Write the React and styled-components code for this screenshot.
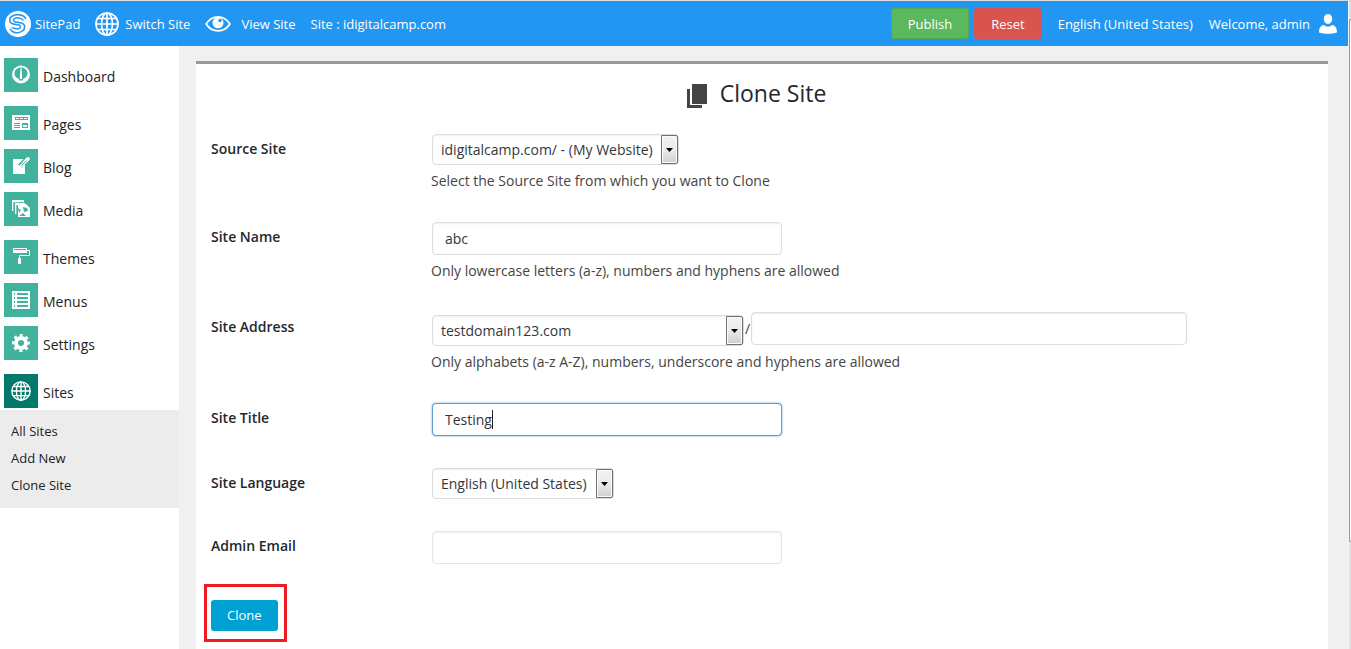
import styled, { createGlobalStyle, css } from 'styled-components'

const menu = [
  { name: 'Dashboard', icon: DashboardIcon, space: true },
  { name: 'Pages', icon: PagesIcon },
  { name: 'Blog', icon: BlogIcon },
  { name: 'Media', icon: MediaIcon, space: true },
  { name: 'Themes', icon: ThemesIcon },
  { name: 'Menus', icon: MenusIcon },
  { name: 'Settings', icon: SettingsIcon, space: true },
  { name: 'Sites', icon: GlobeIcon, active: true },
]

const subMenu = ['All Sites', 'Add New', 'Clone Site']

export default function App() {
  return (
    <>
      <GlobalStyle />
      <Screen>
        <Page>
          <TopBar />
          <Body>
            <SideBar />
            <Main>
              <CloneForm />
            </Main>
          </Body>
        </Page>
        <ScrollTrack>
          <ScrollThumb />
        </ScrollTrack>
      </Screen>
    </>
  )
}

function TopBar() {
  return (
    <Header>
      <HeaderGroup $gap="15px">
        <HeaderLink href="#" $gap="4px">
          <LogoIcon />
          SitePad
        </HeaderLink>
        <HeaderLink href="#" $gap="6px">
          <GlobeIcon size={24} />
          Switch Site
        </HeaderLink>
        <HeaderLink href="#" $gap="10px">
          <EyeIcon />
          View Site
        </HeaderLink>
        <span>Site : idigitalcamp.com</span>
      </HeaderGroup>
      <HeaderGroup $gap="16px">
        <HeaderButtons>
          <HeaderButton type="button" $color="#5cb85c" $border="#4cae4c">Publish</HeaderButton>
          <HeaderButton type="button" $color="#d9534f" $border="#d9534f">Reset</HeaderButton>
        </HeaderButtons>
        <HeaderLink href="#">English (United States)</HeaderLink>
        <HeaderLink href="#" $gap="8px">
          Welcome, admin
          <UserIcon />
        </HeaderLink>
      </HeaderGroup>
    </Header>
  )
}

function SideBar() {
  return (
    <Side>
      <MenuList>
        {menu.map(({ name, icon: Icon, space, active }) => (
          <MenuItem key={name} $space={space}>
            <MenuLink href="#">
              <MenuIcon $active={active}>
                <Icon size={20} />
              </MenuIcon>
              <span>{name}</span>
            </MenuLink>
          </MenuItem>
        ))}
      </MenuList>
      <SubMenu>
        {subMenu.map((name) => (
          <li key={name}>
            <SubLink href="#">{name}</SubLink>
          </li>
        ))}
      </SubMenu>
    </Side>
  )
}

function CloneForm() {
  return (
    <Panel>
      <Title>
        <CopyIcon />
        Clone Site
      </Title>
      <Form onSubmit={(e) => e.preventDefault()}>
        <Row>
          <Label htmlFor="source">Source Site</Label>
          <div>
            <Select id="source" width="247px" value="idigitalcamp.com/ - (My Website)" />
            <Help>Select the Source Site from which you want to Clone</Help>
          </div>
        </Row>
        <Row>
          <Label htmlFor="name">Site Name</Label>
          <div>
            <Input id="name" type="text" defaultValue="abc" />
            <Help>Only lowercase letters (a-z), numbers and hyphens are allowed</Help>
          </div>
        </Row>
        <Row>
          <Label htmlFor="domain">Site Address</Label>
          <div>
            <Address>
              <Select id="domain" width="312px" value="testdomain123.com" />
              <Slash>/</Slash>
              <Input type="text" aria-label="Directory" $wide />
            </Address>
            <Help>Only alphabets (a-z A-Z), numbers, underscore and hyphens are allowed</Help>
          </div>
        </Row>
        <Row>
          <Label htmlFor="title">Site Title</Label>
          <Caret>
            <Input id="title" type="text" defaultValue="Testing" autoFocus />
          </Caret>
        </Row>
        <Row>
          <Label htmlFor="language">Site Language</Label>
          <Select id="language" width="182px" value="English (United States)" />
        </Row>
        <Row>
          <Label htmlFor="email">Admin Email</Label>
          <Input id="email" type="email" $light />
        </Row>
        <Submit>
          <CloneButton type="submit">Clone</CloneButton>
        </Submit>
      </Form>
    </Panel>
  )
}

function Select({ id, width, value }) {
  return (
    <SelectBase $width={width}>
      <select id={id} defaultValue={value}>
        <option>{value}</option>
      </select>
      <Arrow>
        <svg width="7" height="4" viewBox="0 0 7 4">
          <path d="M0 0h7L3.500 4z" fill="#000" />
        </svg>
      </Arrow>
    </SelectBase>
  )
}

function LogoIcon() {
  return (
    <svg width="26" height="26" viewBox="0 0 26 26" fill="none" stroke="#2196f3" strokeWidth="1.5" strokeLinecap="round">
      <circle cx="13" cy="13" r="13" fill="#fff" stroke="none" />
      <path d="M20.700 7.300C19 5 17 4 14 3.800C11 3.600 9 4 7.300 5C5.500 6 4.600 7.500 4.700 9.200C4.800 11 5.800 12.200 7.500 12.800C9.500 13.500 12 13.400 14 14C16 14.600 16 16.800 14 17.500C12 18.100 9.500 17.900 7.300 16.700" />
      <path d="M18 9C16.500 7.500 15 6.800 13 6.700C11 6.600 9.500 7.200 8.700 8.300C8.100 9.400 8.500 10.300 9.700 10.700C11.500 11.200 13.500 11.100 15.300 11.700C18 12.500 19.700 13.500 19.700 15.500C19.700 17.500 19 19 17.300 20C15.500 21.300 13.500 21.800 11.300 21.700C8.800 21.600 6.800 20.500 5.300 18.300" />
    </svg>
  )
}

function GlobeIcon({ size }) {
  return (
    <svg width={size} height={size} viewBox="0 0 24 24" fill="none" stroke="#fff" strokeWidth="1.700">
      <circle cx="12" cy="12" r="11" />
      <ellipse cx="12" cy="12" rx="5.500" ry="11" />
      <path d="M12 1v22M1 12h22M3 6.500h18M3 17.500h18" />
    </svg>
  )
}

function EyeIcon() {
  return (
    <svg width="26" height="18" viewBox="0 0 26 18">
      <path d="M1.200 9C4 4.200 8.200 1.800 13 1.800S22 4.200 24.800 9C22 13.600 17.800 15.800 13 15.800S4 13.600 1.200 9z" fill="none" stroke="#fff" strokeWidth="1.800" />
      <circle cx="13" cy="7.800" r="5.500" fill="#fff" />
      <circle cx="15" cy="5.500" r="1.700" fill="#2196f3" />
    </svg>
  )
}

function UserIcon() {
  return (
    <svg width="20" height="20" viewBox="0 0 20 20" fill="#fff">
      <ellipse cx="10" cy="5" rx="4.200" ry="5" />
      <path d="M1 18.500C1 14 2.500 11.500 6 11C8.500 13.300 11.500 13.300 14 11C17.500 11.500 19 14 19 18.500C14 20.200 6 20.200 1 18.500z" />
    </svg>
  )
}

function CopyIcon() {
  return (
    <svg width="22" height="30" viewBox="0 -6 22 30" fill="#444">
      <path d="M6 0h15v20H6zM1 5h3v16h12v3H1z" />
    </svg>
  )
}

function DashboardIcon({ size }) {
  return (
    <svg width={size} height={size} viewBox="0 0 20 20">
      <circle cx="10" cy="9.500" r="9" fill="#fff" />
      <path d="M10 2.500C6.200 2.500 3.500 5 3.500 8.500C3.500 10.700 4.500 12 6.500 13.200V15.500H13.500V13.200C15.500 12 16.500 10.700 16.500 8.500C16.500 5 13.800 2.500 10 2.500z" fill="#41b29b" />
      <path d="M9.500 3h1L11.300 14H8.700z" fill="#fff" />
      <path d="M5 13l3 1v3H6zM15 13l-3 1v3h2z" fill="#fff" />
    </svg>
  )
}

function PagesIcon({ size }) {
  return (
    <svg width={size} height={size} viewBox="0 0 20 20">
      <path d="M1 2h18v15H1z" fill="#fff" />
      <path d="M4 4h13v3H4zM3 10h6v1H3zM3 12h6v1H3zM3 14h6v1H3zM11 10h6v5h-6z" fill="#41b29b" />
      <path d="M5 5h3v1H5zM9 5h3v1H9zM13 5h3v1h-3zM12 12h4v2h-4z" fill="#fff" />
    </svg>
  )
}

function BlogIcon({ size }) {
  return (
    <svg width={size} height={size} viewBox="0 0 20 20">
      <path d="M2 3h12v15H2z" fill="#fff" />
      <path d="M9 10L16.500 2.500" stroke="#41b29b" strokeWidth="5" />
      <path d="M8.500 11.500L9.500 8.500L15.500 1.500Q18 0 19 2.500L18.500 4L11.500 10.500z" fill="#fff" />
      <path d="M10.500 9.500L15.500 4.500" stroke="#41b29b" strokeWidth="1" />
    </svg>
  )
}

function MediaIcon({ size }) {
  return (
    <svg width={size} height={size} viewBox="0 0 20 20">
      <path d="M1 1h12v3H3v8H1zM4 4h10v3H6v8H4z" fill="#fff" />
      <path d="M2.500 12V3.500H13M5.500 15V6.500H14" fill="none" stroke="#41b29b" strokeWidth="0.700" />
      <path d="M7 5h8l4 4v9H7z" fill="#fff" />
      <path d="M7 9l3 2-2 3zM12 8l4 1 1 3-4 1zM8 17l4-3 3 3zM8 3h3v1H8z" fill="#41b29b" />
    </svg>
  )
}

function ThemesIcon({ size }) {
  return (
    <svg width={size} height={size} viewBox="0 0 20 20">
      <path d="M2 1h14v5H2z" fill="#fff" />
      <path d="M3 2h12v1H3z" fill="#41b29b" />
      <path d="M16 3.500h2.500V8.500H8.500V11" fill="none" stroke="#fff" />
      <path d="M7 11h3v6H7z" fill="#fff" />
    </svg>
  )
}

function MenusIcon({ size }) {
  return (
    <svg width={size} height={size} viewBox="0 0 20 20">
      <path d="M1 1h18v18H1z" fill="#fff" />
      <path d="M6 3h11v2H6zM6 7h11v2H6zM6 11h11v2H6zM6 15h11v2H6zM3 3h1v2H3zM3 7h1v2H3zM3 11h1v2H3zM3 15h1v2H3z" fill="#41b29b" />
    </svg>
  )
}

function SettingsIcon({ size }) {
  return (
    <svg width={size} height={size} viewBox="0 0 20 20" fill="none" stroke="#fff">
      <circle cx="10" cy="10" r="5" strokeWidth="4" />
      <circle cx="10" cy="10" r="7.800" strokeWidth="2.500" strokeDasharray="3.100 3.026" strokeDashoffset="1.550" />
    </svg>
  )
}

const GlobalStyle = createGlobalStyle`
* {
  box-sizing: border-box;
}
body {
  margin: 0;
  font-family: 'Open Sans', sans-serif;
  font-size: 14px;
  color: #222;
  background-color: #f0f0f0;
}
a {
  color: inherit;
  text-decoration: none;
}
ul {
  margin: 0;
  padding: 0;
  list-style: none;
}
button, input, select {
  font-family: inherit;
}
svg {
  display: block;
  flex-shrink: 0;
}
`

const Screen = styled.div`
display: flex;
min-height: 100vh;
border-top: 1px solid #ddd;
`

const Page = styled.div`
flex: 1;
display: flex;
flex-direction: column;
`

const ScrollTrack = styled.div`
width: 3px;
padding-top: 18px;
border-left: 1px solid #f5f5f5;
background-color: #e0e0e0;
`

const ScrollThumb = styled.div`
height: 83%;
border: 1px solid #999;
border-right: none;
border-radius: 2px 0 0 2px;
background-color: #f5f5f5;
`

const Header = styled.header`
display: flex;
justify-content: space-between;
align-items: center;
height: 45px;
padding: 0 10px 0 5px;
font-size: 13px;
color: #fff;
background-color: #2196f3;
white-space: nowrap;
`

const HeaderGroup = styled.div`
display: flex;
align-items: center;
gap: ${(props) => props.$gap};
`

const HeaderLink = styled.a`
display: flex;
align-items: center;
gap: ${(props) => props.$gap};
`

const HeaderButtons = styled.div`
display: flex;
gap: 5px;
`

const HeaderButton = styled.button`
height: 31px;
padding: 0 16px;
border: 1px solid ${(props) => props.$border};
border-radius: 3px;
font-size: 13px;
color: #fff;
background-color: ${(props) => props.$color};
`

const Body = styled.div`
flex: 1;
display: flex;
`

const Side = styled.nav`
width: 179px;
padding-top: 12px;
background-color: #fff;
`

const MenuList = styled.ul`
padding: 0 4px 2px;
`

const MenuItem = styled.li`
margin-bottom: ${(props) => (props.$space ? '14px' : '9px')};

&:last-child {
  margin-bottom: 0;
}
`

const MenuLink = styled.a`
display: flex;
gap: 5px;
line-height: 37px;
height: 34px;
`

const MenuIcon = styled.span`
display: flex;
justify-content: center;
align-items: center;
width: 34px;
height: 34px;
background-color: ${(props) => (props.$active ? '#00796b' : '#41b29b')};
`

const SubMenu = styled.ul`
padding: 8px 11px 9px;
background-color: #ececec;
`

const SubLink = styled.a`
display: block;
font-size: 13px;
line-height: 27px;
`

const Main = styled.main`
flex: 1;
display: flex;
padding: 15px 20px 0 17px;
`

const Panel = styled.section`
flex: 1;
padding: 0 15px;
border-top: 3px solid #999;
background-color: #fff;
`

const Title = styled.h1`
display: flex;
justify-content: center;
align-items: center;
gap: 12px;
margin: 0 12px 12px 0;
font-size: 23px;
font-weight: 400;
line-height: 58px;
color: #23282d;
`

const Form = styled.form`
display: flex;
flex-direction: column;
gap: 32px;
`

const Row = styled.div`
display: grid;
grid-template-columns: 220px 1fr;
align-items: start;
`

const Label = styled.label`
font-weight: 600;
line-height: 30px;
color: #23282d;
`

const Help = styled.p`
margin: 6px 0 0;
line-height: 19px;
color: #444;
`

const field = css`
border: 1px solid #ddd;
border-radius: 4px;
font-size: 14px;
color: #32373c;
background-color: #fff;
box-shadow: inset 0 1px 2px rgba(0, 0, 0, 0.07);
outline: none;
`

const Input = styled.input`
${field}
display: block;
width: ${(props) => (props.$wide ? '436px' : '350px')};
height: 33px;
margin-left: ${(props) => (props.$wide ? '0' : '1px')};
padding: 0 12px;
border-color: ${(props) => (props.$light ? '#e5e5e5' : '#ddd')};

&:focus {
  border-color: #5b9dd9;
  box-shadow: 0 0 2px rgba(30, 140, 190, 0.8);
}
`

// steady text cursor in place of the blinking one
const Caret = styled.div`
position: relative;

> input {
  caret-color: transparent;
}

&::after {
  content: '';
  position: absolute;
  top: 7px;
  left: 61px;
  width: 1px;
  height: 19px;
  background-color: #222;
}
`

const SelectBase = styled.div`
position: relative;
width: ${(props) => props.$width};
margin-left: 1px;

> select {
  ${field}
  display: block;
  appearance: none;
  width: 100%;
  height: 31px;
  padding: 0 20px 0 8px;
}
`

const Arrow = styled.span`
position: absolute;
top: 1px;
right: 1px;
bottom: 1px;
display: flex;
justify-content: center;
align-items: center;
width: 17px;
border: 1px solid #707070;
border-radius: 0 2px 2px 0;
box-shadow: inset 0 0 0 1px #fcfcfc;
background: linear-gradient(#f2f2f2, #ebebeb 50%, #cfcfcf);
pointer-events: none;
`

const Address = styled.div`
display: flex;
align-items: flex-end;

> input {
  align-self: flex-start;
  margin-bottom: 1px;
}
`

const Slash = styled.span`
width: 7px;
line-height: 34px;
text-align: center;
color: #444;
`

// marked with a red frame so the user sees where to click
const Submit = styled.div`
position: relative;
align-self: flex-start;
margin: 4px 0 18px;

&::after {
  content: '';
  position: absolute;
  inset: -16px -9px -11px -7px;
  border: 3px solid #ed1c24;
  pointer-events: none;
}
`

const CloneButton = styled.button`
display: block;
height: 31px;
padding: 0 16px 2px;
border: none;
border-radius: 3px;
font-size: 13px;
color: #fff;
background-color: #00a0d2;
`
